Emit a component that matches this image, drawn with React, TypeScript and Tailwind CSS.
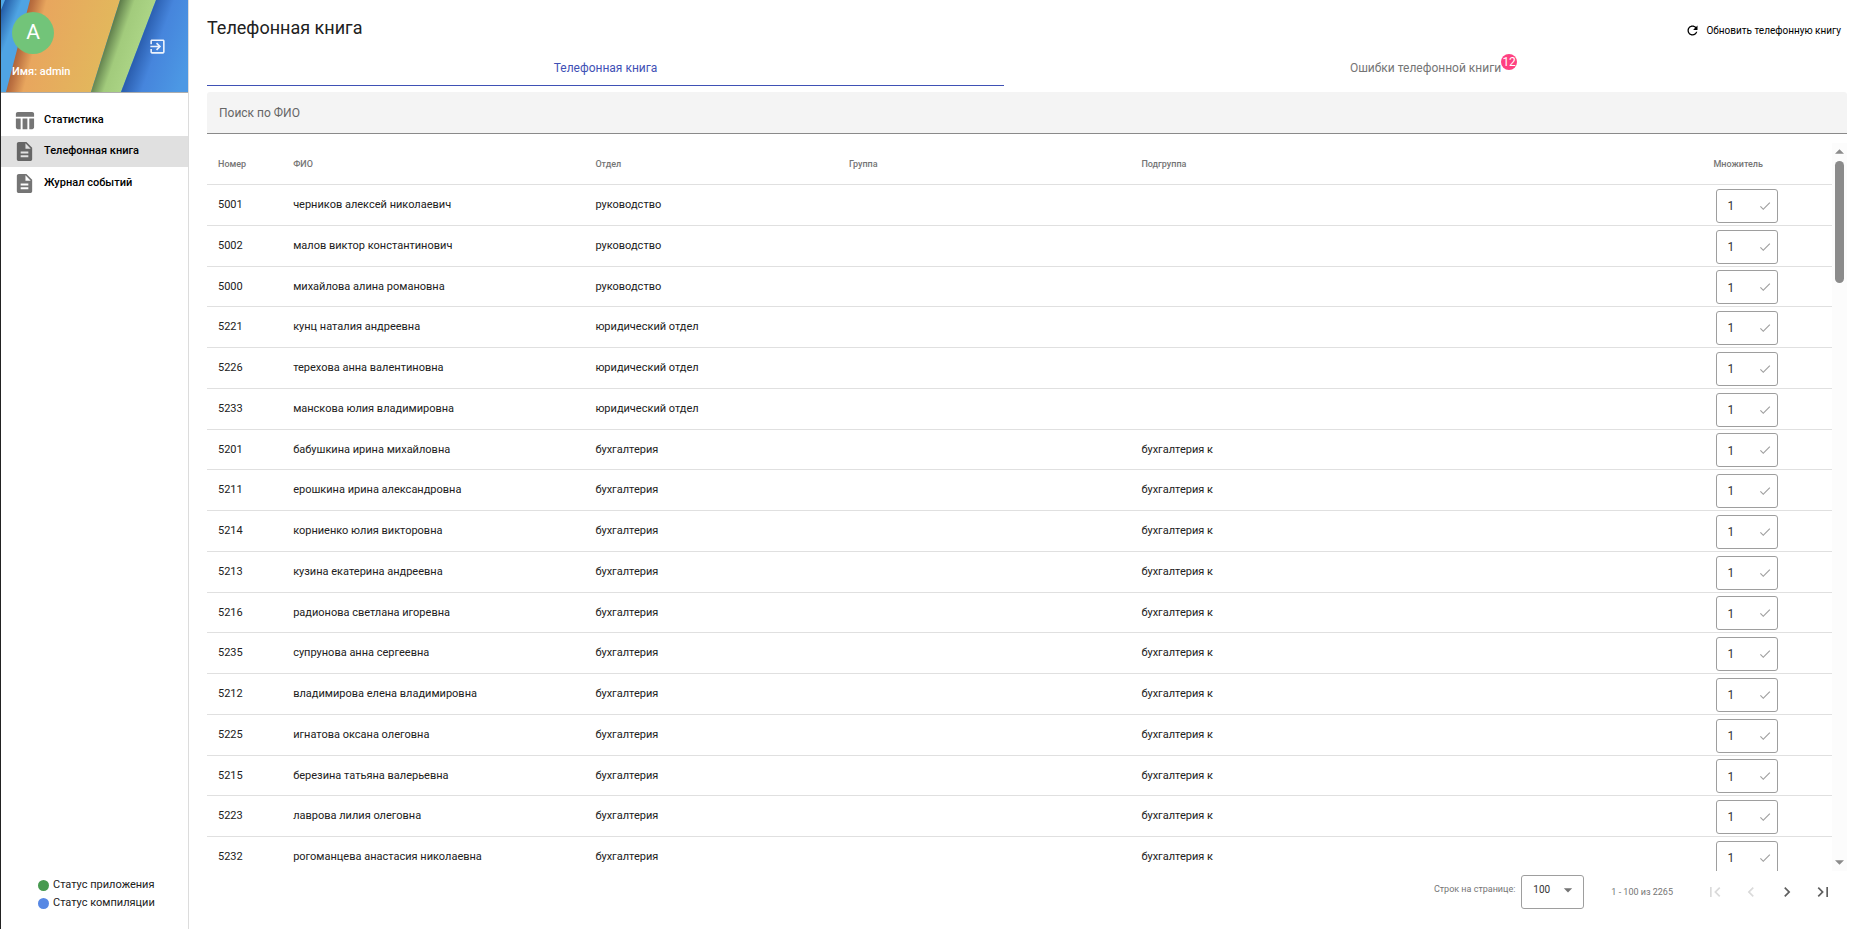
import { useState } from "react";

interface Person {
    number: string;
    name: string;
    department: string;
    subgroup?: string;
}

const people: Person[] = [
    { number: "5001", name: "черников алексей николаевич", department: "руководство" },
    { number: "5002", name: "малов виктор константинович", department: "руководство" },
    { number: "5000", name: "михайлова алина романовна", department: "руководство" },
    { number: "5221", name: "кунц наталия андреевна", department: "юридический отдел" },
    { number: "5226", name: "терехова анна валентиновна", department: "юридический отдел" },
    { number: "5233", name: "манскова юлия владимировна", department: "юридический отдел" },
    { number: "5201", name: "бабушкина ирина михайловна", department: "бухгалтерия", subgroup: "бухгалтерия к" },
    { number: "5211", name: "ерошкина ирина александровна", department: "бухгалтерия", subgroup: "бухгалтерия к" },
    { number: "5214", name: "корниенко юлия викторовна", department: "бухгалтерия", subgroup: "бухгалтерия к" },
    { number: "5213", name: "кузина екатерина андреевна", department: "бухгалтерия", subgroup: "бухгалтерия к" },
    { number: "5216", name: "радионова светлана игоревна", department: "бухгалтерия", subgroup: "бухгалтерия к" },
    { number: "5235", name: "супрунова анна сергеевна", department: "бухгалтерия", subgroup: "бухгалтерия к" },
    { number: "5212", name: "владимирова елена владимировна", department: "бухгалтерия", subgroup: "бухгалтерия к" },
    { number: "5225", name: "игнатова оксана олеговна", department: "бухгалтерия", subgroup: "бухгалтерия к" },
    { number: "5215", name: "березина татьяна валерьевна", department: "бухгалтерия", subgroup: "бухгалтерия к" },
    { number: "5223", name: "лаврова лилия олеговна", department: "бухгалтерия", subgroup: "бухгалтерия к" },
    { number: "5232", name: "рогоманцева анастасия николаевна", department: "бухгалтерия", subgroup: "бухгалтерия к" },
];

// Контуры иконок Material, сетка 24x24
const icons = {
    table: "M10 10.02h5V21h-5zM17 21h3c1.1 0 2-.9 2-2v-9h-5v11zm3-18H5c-1.1 0-2 .9-2 2v3h19V5c0-1.1-.9-2-2-2zM3 19c0 1.1.9 2 2 2h3V10H3v9z",
    document: "M14 2H6c-1.1 0-1.99.9-1.99 2L4 20c0 1.1.89 2 1.99 2H18c1.1 0 2-.9 2-2V8l-6-6zm2 16H8v-2h8v2zm0-4H8v-2h8v2zm-3-5V3.5L18.5 9H13z",
    exit: "M10.09 15.59L11.5 17l5-5-5-5-1.41 1.41L12.67 11H3v2h9.67l-2.58 2.59zM19 3H5c-1.11 0-2 .9-2 2v4h2V5h14v14H5v-4H3v4c0 1.1.89 2 2 2h14c1.1 0 2-.9 2-2V5c0-1.1-.9-2-2-2z",
    refresh: "M17.65 6.35C16.2 4.9 14.21 4 12 4c-4.42 0-7.99 3.58-7.99 8s3.57 8 7.99 8c3.73 0 6.84-2.55 7.73-6h-2.08c-.82 2.33-3.04 4-5.65 4-3.31 0-6-2.69-6-6s2.69-6 6-6c1.66 0 3.14.69 4.22 1.78L13 11h7V4l-2.35 2.35z",
    check: "M9 16.17L4.83 12l-1.42 1.41L9 19 21 7l-1.41-1.41z",
    arrowDown: "M7 10l5 5 5-5z",
    first: "M18.41 16.59L13.82 12l4.59-4.59L17 6l-6 6 6 6zM6 6h2v12H6z",
    prev: "M15.41 7.41L14 6l-6 6 6 6 1.41-1.41L10.83 12z",
    next: "M10 6L8.59 7.41 13.17 12l-4.58 4.59L10 18l6-6z",
    last: "M5.59 7.41L10.18 12l-4.59 4.59L7 18l6-6-6-6zM16 6h2v12h-2z",
};

function Icon({ name, className }: { name: keyof typeof icons; className?: string }) {
    return (
        <svg viewBox="0 0 24 24" fill="currentColor" className={className} aria-hidden="true">
            <path d={icons[name]} />
        </svg>
    );
}

function Wallpaper() {
    return (
        <svg viewBox="0 0 187 92" preserveAspectRatio="none" className="absolute inset-0 size-full" aria-hidden="true">
            <defs>
                <linearGradient id="orange" gradientUnits="userSpaceOnUse" x1="16" y1="40" x2="108" y2="64">
                    <stop offset="0" stopColor="#a85f35" />
                    <stop offset="0.07" stopColor="#bd7242" />
                    <stop offset="0.2" stopColor="#e8a65e" />
                    <stop offset="1" stopColor="#e2b95c" />
                </linearGradient>
                <linearGradient id="green" gradientUnits="userSpaceOnUse" x1="104" y1="46" x2="136" y2="57">
                    <stop offset="0" stopColor="#5f7e4b" />
                    <stop offset="0.4" stopColor="#a2cb7c" />
                    <stop offset="1" stopColor="#acd586" />
                </linearGradient>
                <linearGradient id="blue" gradientUnits="userSpaceOnUse" x1="137" y1="46" x2="187" y2="64">
                    <stop offset="0" stopColor="#2a5dae" />
                    <stop offset="0.35" stopColor="#4685dc" />
                    <stop offset="1" stopColor="#4c98e4" />
                </linearGradient>
                <linearGradient id="corner" gradientUnits="userSpaceOnUse" x1="0" y1="8" x2="16" y2="14">
                    <stop offset="0" stopColor="#2158a3" />
                    <stop offset="1" stopColor="#4fa4e3" />
                </linearGradient>
            </defs>
            <path d="M0 0H187V92H0Z" fill="#50a8e8" />
            <path d="M4 0H30L6 92H0V10Z" fill="url(#corner)" />
            <path d="M29 0H119L90 92H5Z" fill="url(#orange)" />
            <path d="M119 0H155L120 92H90Z" fill="url(#green)" />
            <path d="M155 0H187V92H120Z" fill="url(#blue)" />
        </svg>
    );
}

function Sidebar() {
    return (
        <aside className="flex w-[189px] shrink-0 flex-col border-r border-l border-r-[#dcdcdc] border-l-[#222] bg-white">
            <div className="relative h-[93px] border-b border-[#adadad]">
                <Wallpaper />
                <div className="relative flex h-full items-center justify-between pr-[21px] pl-[11px]">
                    <div className="flex flex-col gap-[10px]">
                        <div className="flex size-[42px] items-center justify-center rounded-full bg-[#72c479] text-[21px] text-white">A</div>
                        <p className="text-[11px] leading-4 font-medium text-white">Имя: admin</p>
                    </div>
                    <button type="button" aria-label="Выйти" className="text-white/90">
                        <Icon name="exit" className="size-[19px]" />
                    </button>
                </div>
            </div>
            <nav className="flex flex-col pt-[11px] text-[11px] font-medium text-black">
                <a href="#stats" className="flex h-8 items-center gap-2 pl-3">
                    <Icon name="table" className="size-[23px] text-[#757575]" />
                    Статистика
                </a>
                <a href="#book" aria-current="page" className="flex h-[31px] items-center gap-2 bg-[#e0e0e0] pl-3">
                    <Icon name="document" className="size-[23px] text-[#666]" />
                    Телефонная книга
                </a>
                <a href="#log" className="flex h-8 items-center gap-2 pl-3">
                    <Icon name="document" className="size-[23px] text-[#757575]" />
                    Журнал событий
                </a>
            </nav>
            <ul className="mt-auto flex flex-col pb-[17px] pl-[37px] text-[11px] leading-[18px]">
                <li className="flex items-center gap-1">
                    <span className="size-[11px] rounded-full bg-[#479a50]" />
                    Статус приложения
                </li>
                <li className="flex items-center gap-1">
                    <span className="size-[11px] rounded-full bg-[#5788e4]" />
                    Статус компиляции
                </li>
            </ul>
        </aside>
    );
}

function PeopleTable() {
    return (
        <table className="w-full table-fixed border-collapse text-left text-[11px]">
            <colgroup>
                <col className="w-[5.3%]" />
                <col className="w-[18.6%]" />
                <col className="w-[15.6%]" />
                <col className="w-[18%]" />
                <col className="w-[35.2%]" />
                <col />
            </colgroup>
            <thead>
                <tr className="h-[41px] border-b border-[#e0e0e0] text-[9px] text-[#757575] [&>th]:pt-[3px] [&>th]:font-medium">
                    <th className="pl-[11px]">Номер</th>
                    <th>ФИО</th>
                    <th>Отдел</th>
                    <th>Группа</th>
                    <th>Подгруппа</th>
                    <th>Множитель</th>
                </tr>
            </thead>
            <tbody>
                {people.map((person) => (
                    <tr key={person.number} className="h-[41px] border-b border-[#e0e0e0] nth-[4n+3]:h-10 [&>td]:pt-[2px]">
                        <td className="pl-[11px]">{person.number}</td>
                        <td>{person.name}</td>
                        <td>{person.department}</td>
                        <td />
                        <td>{person.subgroup}</td>
                        <td className="pl-[3px]">
                            <div className="flex h-[34px] w-[62px] items-center justify-between rounded-[3px] border border-[#9e9e9e] pr-[5px] pl-[10px]">
                                <input
                                    type="text"
                                    defaultValue="1"
                                    aria-label={`Множитель ${person.number}`}
                                    className="w-5 pt-px text-[12px] text-[#333] outline-none"
                                />
                                <Icon name="check" className="size-[14px] text-[#a0a0a0]" />
                            </div>
                        </td>
                    </tr>
                ))}
            </tbody>
        </table>
    );
}

function Scrollbar() {
    return (
        <div className="flex w-[15px] shrink-0 flex-col items-center bg-[#fcfcfc] py-[6px]" aria-hidden="true">
            <svg viewBox="0 0 10 5" className="h-[5px] w-[9px] fill-[#8b8b8b]">
                <path d="M0 5L5 0L10 5Z" />
            </svg>
            <div className="mt-[7px] h-[122px] w-[9px] rounded-full bg-[#8b8b8b]" />
            <svg viewBox="0 0 10 5" className="mt-auto h-[5px] w-[9px] fill-[#8b8b8b]">
                <path d="M0 0H10L5 5Z" />
            </svg>
        </div>
    );
}

function Paginator() {
    return (
        <div className="flex h-[58px] items-start justify-end pt-1 text-[9px] text-[#757575]">
            <label htmlFor="page-size" className="mt-[9px] mr-[6px] leading-[11px]">
                Строк на странице:
            </label>
            <div className="relative">
                <select
                    id="page-size"
                    defaultValue="100"
                    className="h-[34px] w-[63px] appearance-none rounded-[3px] border border-[#9e9e9e] pb-[6px] pl-[11px] text-[10px] text-[#333]"
                >
                    <option>50</option>
                    <option>100</option>
                </select>
                <Icon name="arrowDown" className="pointer-events-none absolute top-[5px] right-[6px] size-5 text-[#757575]" />
            </div>
            <span className="mt-3 mr-8 ml-[27px] leading-[11px]">1 - 100 из 2265</span>
            <div className="mr-[14px] flex gap-4 pt-[7px] text-[#5f5f5f]">
                <button type="button" disabled aria-label="Первая страница" className="text-[#dadada]">
                    <Icon name="first" className="size-5" />
                </button>
                <button type="button" disabled aria-label="Предыдущая страница" className="text-[#dadada]">
                    <Icon name="prev" className="size-5" />
                </button>
                <button type="button" aria-label="Следующая страница">
                    <Icon name="next" className="size-5" />
                </button>
                <button type="button" aria-label="Последняя страница">
                    <Icon name="last" className="size-5" />
                </button>
            </div>
        </div>
    );
}

export default function App() {
    const [query, setQuery] = useState("");

    return (
        <div className="flex h-screen overflow-hidden bg-white font-[Roboto,sans-serif] text-[#212121]">
            <Sidebar />
            <main className="flex min-w-0 flex-1 flex-col pr-[17px] pl-[18px]">
                <header className="flex h-[54px] items-center justify-between pr-[6px]">
                    <h1 className="text-[18px]">Телефонная книга</h1>
                    <button type="button" className="flex items-center gap-[6px] pt-[6px] text-[10px] text-black">
                        <Icon name="refresh" className="size-[15px]" />
                        Обновить телефонную книгу
                    </button>
                </header>

                <div role="tablist" className="flex h-8 text-[12px]">
                    <button type="button" role="tab" aria-selected="true" className="w-[48.6%] border-b border-[#3f51b5] pb-[3px] text-[#3f51b5]">
                        Телефонная книга
                    </button>
                    <button type="button" role="tab" aria-selected="false" className="flex flex-1 items-center justify-center pb-1 text-[#757575]">
                        <span className="relative">
                            Ошибки телефонной книги
                            <span className="absolute -top-[5px] left-full flex size-4 items-center justify-center rounded-full bg-[#ff4081] text-white">
                                12
                            </span>
                        </span>
                    </button>
                </div>

                <input
                    type="search"
                    value={query}
                    onChange={(e) => setQuery(e.target.value)}
                    placeholder="Поиск по ФИО"
                    aria-label="Поиск по ФИО"
                    className="mt-[6px] h-[42px] shrink-0 rounded-t-[3px] border-b border-[#8a8a8a] bg-[#f4f4f4] px-3 text-[12px] outline-none placeholder:text-[#666]"
                />

                <div className="mt-[9px] flex min-h-0 flex-1">
                    <div className="min-w-0 flex-1 overflow-hidden">
                        <PeopleTable />
                    </div>
                    <Scrollbar />
                </div>

                <Paginator />
            </main>
        </div>
    );
}
